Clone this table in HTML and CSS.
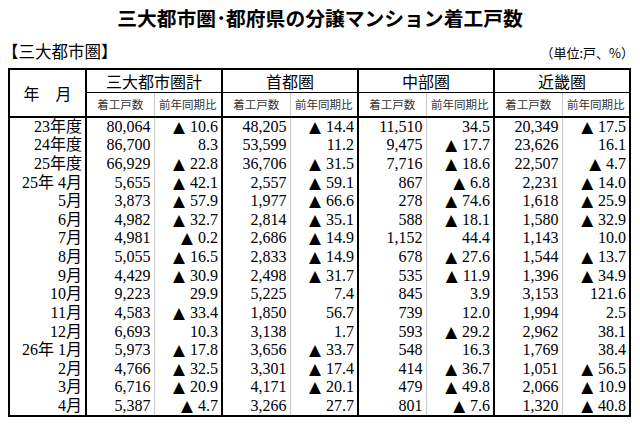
FILE: index.html
```html
<!DOCTYPE html>
<html lang="ja">
<head>
<meta charset="utf-8">
<title>三大都市圏・都府県の分譲マンション着工戸数</title>
<link rel="stylesheet" href="styles.css">
</head>
<body>
<div class="page">
  <h1 class="title">三大都市圏･都府県の分譲マンション着工戸数</h1>
  <div class="subhead">
    <span class="section">【三大都市圏】</span>
    <span class="unit">（単位:戸、%）</span>
  </div>
  <table class="data">
    <colgroup>
      <col class="c-ym">
      <col class="c-a"><col class="c-b">
      <col class="c-a"><col class="c-b">
      <col class="c-a"><col class="c-b">
      <col class="c-a"><col class="c-b">
    </colgroup>
    <thead>
      <tr class="h1">
        <th class="ym" rowspan="2">年　月</th>
        <th class="grp" colspan="2">三大都市圏計</th>
        <th class="grp" colspan="2">首都圏</th>
        <th class="grp" colspan="2">中部圏</th>
        <th class="grp" colspan="2">近畿圏</th>
      </tr>
      <tr class="h2">
        <th class="sub first">着工戸数</th><th class="sub">前年同期比</th>
        <th class="sub first">着工戸数</th><th class="sub">前年同期比</th>
        <th class="sub first">着工戸数</th><th class="sub">前年同期比</th>
        <th class="sub first">着工戸数</th><th class="sub">前年同期比</th>
      </tr>
    </thead>
    <tbody>
      <tr><td class="lbl">23年度</td><td class="n">80,064</td><td class="r"><span class="tri">▲</span>10.6</td><td class="n">48,205</td><td class="r"><span class="tri">▲</span>14.4</td><td class="n">11,510</td><td class="r">34.5</td><td class="n">20,349</td><td class="r"><span class="tri">▲</span>17.5</td></tr>
      <tr><td class="lbl">24年度</td><td class="n">86,700</td><td class="r">8.3</td><td class="n">53,599</td><td class="r">11.2</td><td class="n">9,475</td><td class="r"><span class="tri">▲</span>17.7</td><td class="n">23,626</td><td class="r">16.1</td></tr>
      <tr><td class="lbl">25年度</td><td class="n">66,929</td><td class="r"><span class="tri">▲</span>22.8</td><td class="n">36,706</td><td class="r"><span class="tri">▲</span>31.5</td><td class="n">7,716</td><td class="r"><span class="tri">▲</span>18.6</td><td class="n">22,507</td><td class="r"><span class="tri">▲</span>4.7</td></tr>
      <tr><td class="lbl">25年 4月</td><td class="n">5,655</td><td class="r"><span class="tri">▲</span>42.1</td><td class="n">2,557</td><td class="r"><span class="tri">▲</span>59.1</td><td class="n">867</td><td class="r"><span class="tri">▲</span>6.8</td><td class="n">2,231</td><td class="r"><span class="tri">▲</span>14.0</td></tr>
      <tr><td class="lbl">5月</td><td class="n">3,873</td><td class="r"><span class="tri">▲</span>57.9</td><td class="n">1,977</td><td class="r"><span class="tri">▲</span>66.6</td><td class="n">278</td><td class="r"><span class="tri">▲</span>74.6</td><td class="n">1,618</td><td class="r"><span class="tri">▲</span>25.9</td></tr>
      <tr><td class="lbl">6月</td><td class="n">4,982</td><td class="r"><span class="tri">▲</span>32.7</td><td class="n">2,814</td><td class="r"><span class="tri">▲</span>35.1</td><td class="n">588</td><td class="r"><span class="tri">▲</span>18.1</td><td class="n">1,580</td><td class="r"><span class="tri">▲</span>32.9</td></tr>
      <tr><td class="lbl">7月</td><td class="n">4,981</td><td class="r"><span class="tri">▲</span>0.2</td><td class="n">2,686</td><td class="r"><span class="tri">▲</span>14.9</td><td class="n">1,152</td><td class="r">44.4</td><td class="n">1,143</td><td class="r">10.0</td></tr>
      <tr><td class="lbl">8月</td><td class="n">5,055</td><td class="r"><span class="tri">▲</span>16.5</td><td class="n">2,833</td><td class="r"><span class="tri">▲</span>14.9</td><td class="n">678</td><td class="r"><span class="tri">▲</span>27.6</td><td class="n">1,544</td><td class="r"><span class="tri">▲</span>13.7</td></tr>
      <tr><td class="lbl">9月</td><td class="n">4,429</td><td class="r"><span class="tri">▲</span>30.9</td><td class="n">2,498</td><td class="r"><span class="tri">▲</span>31.7</td><td class="n">535</td><td class="r"><span class="tri">▲</span>11.9</td><td class="n">1,396</td><td class="r"><span class="tri">▲</span>34.9</td></tr>
      <tr><td class="lbl">10月</td><td class="n">9,223</td><td class="r">29.9</td><td class="n">5,225</td><td class="r">7.4</td><td class="n">845</td><td class="r">3.9</td><td class="n">3,153</td><td class="r">121.6</td></tr>
      <tr><td class="lbl">11月</td><td class="n">4,583</td><td class="r"><span class="tri">▲</span>33.4</td><td class="n">1,850</td><td class="r">56.7</td><td class="n">739</td><td class="r">12.0</td><td class="n">1,994</td><td class="r">2.5</td></tr>
      <tr><td class="lbl">12月</td><td class="n">6,693</td><td class="r">10.3</td><td class="n">3,138</td><td class="r">1.7</td><td class="n">593</td><td class="r"><span class="tri">▲</span>29.2</td><td class="n">2,962</td><td class="r">38.1</td></tr>
      <tr><td class="lbl">26年 1月</td><td class="n">5,973</td><td class="r"><span class="tri">▲</span>17.8</td><td class="n">3,656</td><td class="r"><span class="tri">▲</span>33.7</td><td class="n">548</td><td class="r">16.3</td><td class="n">1,769</td><td class="r">38.4</td></tr>
      <tr><td class="lbl">2月</td><td class="n">4,766</td><td class="r"><span class="tri">▲</span>32.5</td><td class="n">3,301</td><td class="r"><span class="tri">▲</span>17.4</td><td class="n">414</td><td class="r"><span class="tri">▲</span>36.7</td><td class="n">1,051</td><td class="r"><span class="tri">▲</span>56.5</td></tr>
      <tr><td class="lbl">3月</td><td class="n">6,716</td><td class="r"><span class="tri">▲</span>20.9</td><td class="n">4,171</td><td class="r"><span class="tri">▲</span>20.1</td><td class="n">479</td><td class="r"><span class="tri">▲</span>49.8</td><td class="n">2,066</td><td class="r"><span class="tri">▲</span>10.9</td></tr>
      <tr><td class="lbl">4月</td><td class="n">5,387</td><td class="r"><span class="tri">▲</span>4.7</td><td class="n">3,266</td><td class="r">27.7</td><td class="n">801</td><td class="r"><span class="tri">▲</span>7.6</td><td class="n">1,320</td><td class="r"><span class="tri">▲</span>40.8</td></tr>
    </tbody>
  </table>
</div>
</body>
</html>
```

FILE: styles.css
```css
html, body {
  margin: 0;
  padding: 0;
  background: #ffffff;
}

.page {
  width: 640px;
  height: 426px;
  overflow: hidden;
  color: #000;
  font-family: "Noto Sans CJK JP", "Noto Sans", sans-serif;
}

.title {
  margin: 8px 0 0;
  font-size: 19.8px;
  line-height: 20px;
  font-weight: bold;
  text-align: center;
  letter-spacing: 0;
}

.subhead {
  margin: 14px 6px 0 2px;
  display: flex;
  justify-content: space-between;
  align-items: baseline;
  line-height: 18px;
}

.section {
  font-size: 16.5px;
  font-weight: normal;
}

.unit {
  font-size: 13px;
}

.data {
  margin: 6px 0 0 8px;
  width: 620px;
  table-layout: fixed;
  border-collapse: collapse;
  border: 2px solid #000;
}

.c-ym { width: 77px; }
.c-a { width: 68px; }
.c-b { width: 68px; }

.data th {
  padding: 0;
  font-weight: normal;
  text-align: center;
  vertical-align: middle;
  white-space: nowrap;
}

.h1 { height: 23px; }
.h2 { height: 25px; }

.ym {
  font-size: 16px;
  border-right: 2px solid #000;
  border-bottom: 2px solid #000;
}

.grp {
  font-size: 16px;
  line-height: 18px;
  border-left: 2px solid #000;
  border-bottom: 1px solid #000;
}

.sub {
  font-size: 11.5px;
  line-height: 14px;
  color: #333;
  border-bottom: 2px solid #000;
  border-left: 1px solid #c8c8c8;
}

.sub.first {
  border-left: 2px solid #000;
}

.data tbody tr {
  height: 18.625px;
}

.data td {
  padding: 0 3px 0 0;
  font-family: "Liberation Serif", "Noto Sans CJK JP", serif;
  font-size: 16px;
  line-height: 18px;
  text-align: right;
  white-space: nowrap;
  vertical-align: middle;
}

.tri {
  font-family: "DejaVu Sans", "Noto Sans CJK JP", sans-serif;
  font-size: 15.5px;
  line-height: 0;
  margin-right: 5px;
}

.data td.lbl {
  border-right: 2px solid #000;
}

.data td.n {
  border-left: 2px solid #000;
}

.data td.r {
  border-left: 1px solid #c8c8c8;
}
```
